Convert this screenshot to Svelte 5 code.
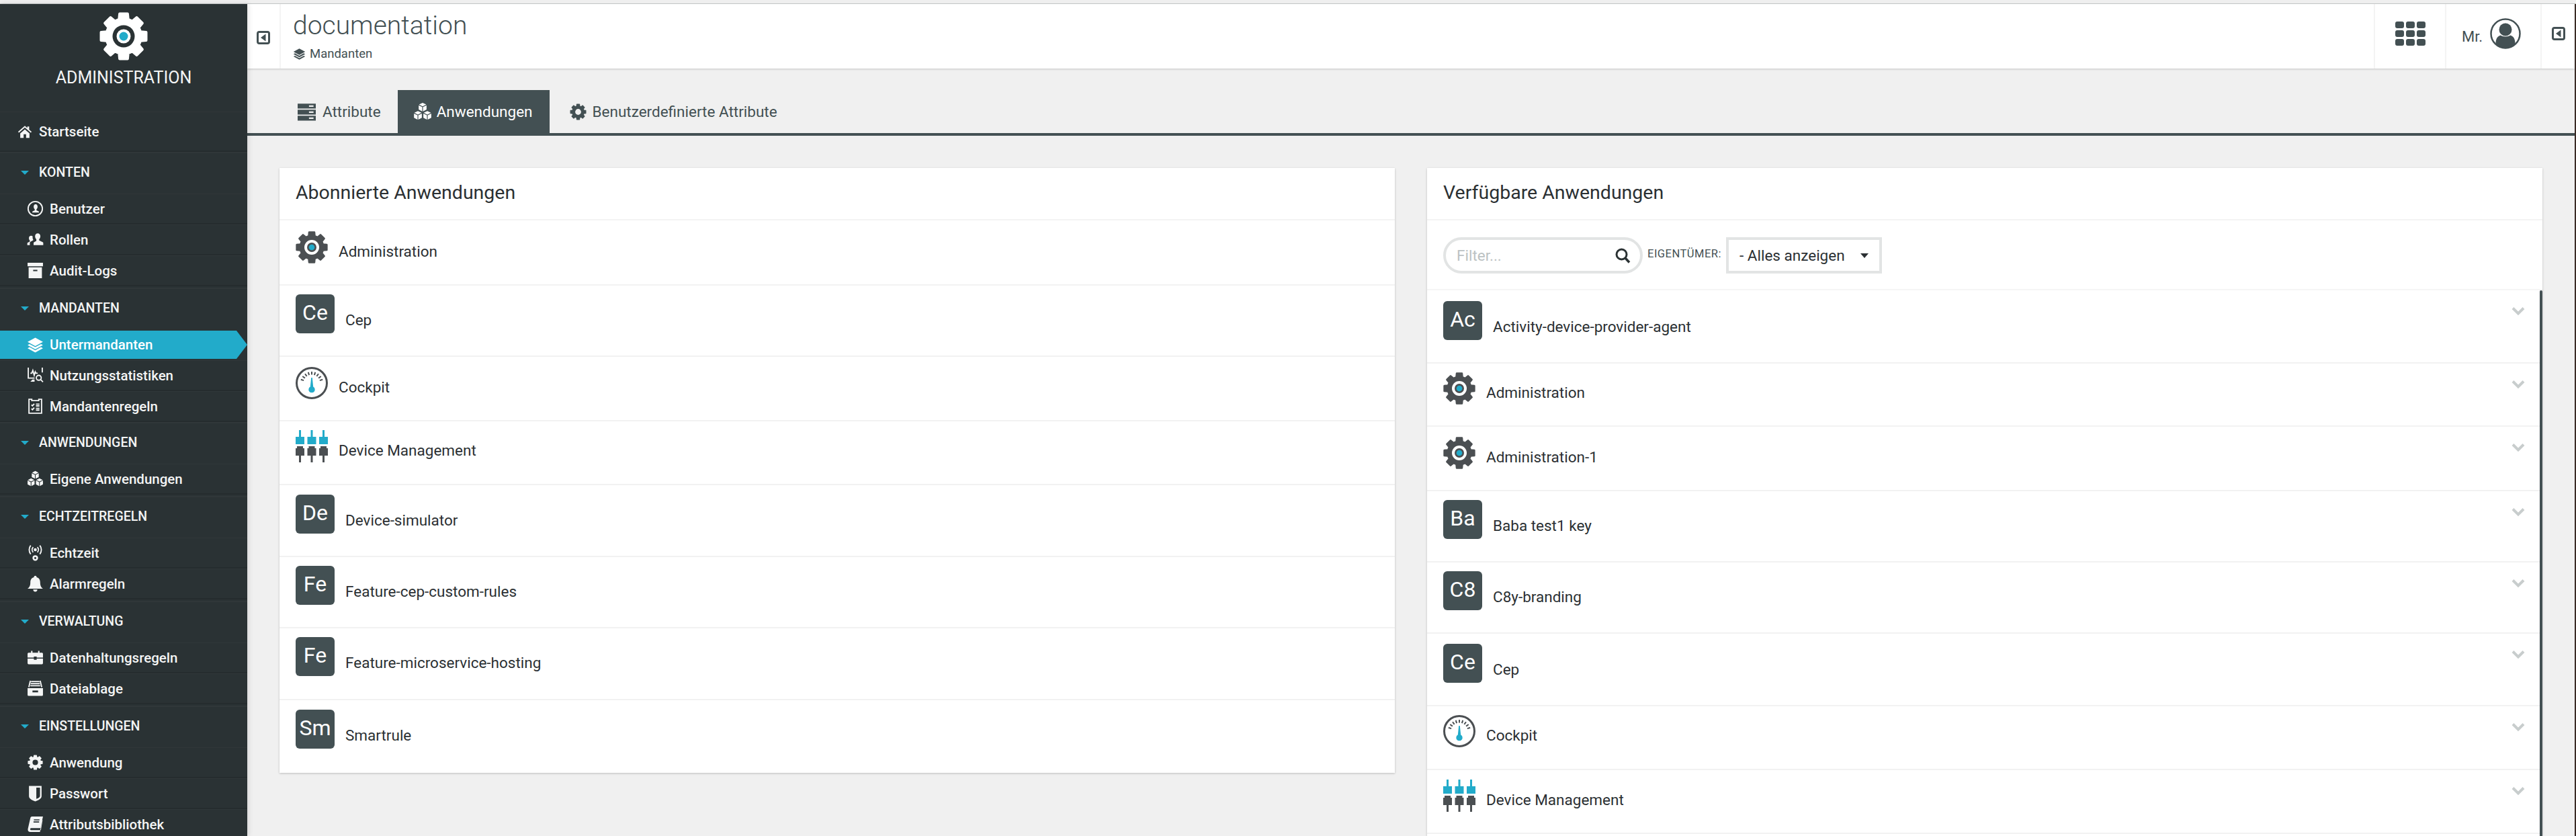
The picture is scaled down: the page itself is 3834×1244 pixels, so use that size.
<script>
  const icons = {
    home: { d: 'M12 2.5 1 12l1.3 1.5L12 5.3l9.7 8.2L23 12l-4-3.4V3.5h-3v2.6zM4.5 14.6 12 8.2l7.5 6.4V22H14v-6h-4v6H4.5z' },
    user: {
      s: 'M12 1.8a10.2 10.2 0 1 0 0 20.4a10.2 10.2 0 1 0 0-20.4z',
      d: 'M12 5.5c2 0 3.3 1.5 3.3 3.7 0 1.7-.8 3.2-1.6 3.9v1.2l2.7 1.3c.6.3.9.8.9 1.4v.5H7.7v-.5c0-.6.3-1.1.9-1.4l2.7-1.3v-1.2c-.8-.7-1.6-2.2-1.6-3.9 0-2.2 1.3-3.7 3.3-3.7z',
    },
    users: { d: 'M15.5 3c2.2 0 3.8 1.7 3.8 4.2 0 2-.9 3.7-1.8 4.4v1.5l5 2.4c.6.3.9.8.9 1.4V20H9.6v-3.1c0-.6.3-1.1.9-1.4l3-1.5v-2.4c-.9-.7-1.8-2.4-1.8-4.4 0-2.5 1.6-4.2 3.8-4.2zM6 6.5c.9 0 1.7.3 2.3.9-.3 1.5-.1 3.2.7 4.7v.9l-3.5 1.8c-.9.5-1.3 1.2-1.3 2.1V20H.6v-2.6c0-.5.2-.9.7-1.1l2.9-1.5v-1.6c-.7-.6-1.3-1.8-1.3-3.4C2.9 8 4.2 6.5 6 6.5z' },
    archive: { d: 'M1 1h22v5H1zM2.5 7.5h19V23h-19zM9 11v2h6v-2z' },
    layers: { d: 'M12 1.5 23 7.5 12 13.5 1 7.5zM1 12l2.8-1.5 8.2 4.5 8.2-4.5L23 12l-11 6zM1 16.5 3.8 15l8.2 4.5L20.2 15l2.8 1.5-11 6z' },
    stats: {
      s: 'M2 1v15h9M22 1v7M5 9h2l1.5-4 2 7 1.5-5 1 2h2.5M17 12a3.5 3.5 0 1 0 0 7a3.5 3.5 0 1 0 0-7zM19.8 18.2 23 21.5',
      d: 'M5 21l3-3h3v3z',
    },
    clipboard: {
      s: 'M3 2h4v2h10V2h4v20H3zM6.5 10l1.5 1.5 2.5-3M6.5 15.5 8 17l2.5-3M13 9h5M13 11.5h5M13 15h5M13 17.5h5',
    },
    cubes: {
      d: 'M12 .8l4.6 2.3L12 5.4 7.4 3.1zM7 4l4.5 2.3v5.5L7 9.5zM17 4l-4.5 2.3v5.5L17 9.5zM6 11.3l4.6 2.3L6 15.9l-4.6-2.3zM1 14.5l4.5 2.3v5.5L1 20zM11 14.5l-4.5 2.3v5.5L11 20zM18 11.3l4.6 2.3-4.6 2.3-4.6-2.3zM13 14.5l4.5 2.3v5.5L13 20zM23 14.5l-4.5 2.3v5.5L23 20z',
    },
    signal: {
      s: 'M5.5 1.5a10 10 0 0 0 0 12.5M18.5 1.5a10 10 0 0 1 0 12.5M9 4a5.5 5.5 0 0 0 0 7.5M15 4a5.5 5.5 0 0 1 0 7.5',
      d: 'M12 5.5a2.2 2.2 0 1 0 0 4.4a2.2 2.2 0 1 0 0-4.4zM12 15.5a4 4 0 1 0 0 8a4 4 0 1 0 0-8zM12 18a1.5 1.5 0 1 1 0 3a1.5 1.5 0 1 1 0-3z',
    },
    bell: { d: 'M12 .8a2 2 0 0 1 2 2c3.4.8 5 3.7 5 7.2 0 5 1.5 7.3 4 9.2H1c2.5-1.9 4-4.2 4-9.2 0-3.5 1.6-6.4 5-7.2a2 2 0 0 1 2-2zM9 20.5h6a3 3 0 0 1-6 0z' },
    toolbox: { d: 'M1 6.5A1.5 1.5 0 0 1 2.5 5H6V2.5h2V5h8V2.5h2V5h3.5A1.5 1.5 0 0 1 23 6.5V12h-9v-1.5h-4V12H1zM1 13.5h9V15h4v-1.5h9V20a1.5 1.5 0 0 1-1.5 1.5h-19A1.5 1.5 0 0 1 1 20z' },
    tray: {
      s: 'M6 2h12M5.5 5h13M5 8h14M5 1 2.8 10M19 1l2.2 9',
      d: 'M1 11.5h22V21a1.5 1.5 0 0 1-1.5 1.5h-19A1.5 1.5 0 0 1 1 21zM8 15v2.5h8V15z',
    },
    shield: { d: 'M3 1.5h18V16c0 3.5-4 5.8-9 7.5-5-1.7-9-4-9-7.5zM13.5 3.8V20c3-1 5.3-2.4 5.3-4.2V3.8z' },
    book: { d: 'M7.5 1H23l-3.5 16.5H6c-1.6 0-1.8 2.8 0 2.8h13.2l-.5 2.7H4.5C2 23 1 21 1.5 18.5L5 3c.3-1.2 1.2-2 2.5-2zM10 5v1.5h8V5zM9.500 8v1.5h8V8zM22.5 6 20 20.3h-1l3-14z' },
    server: { d: 'M0 1h24v6.5H0zM15 3.3v2h6v-2zM0 9h24v6.5H0zM15 11.3v2h6v-2zM0 17h24v6.5H0zM15 19.3v2h6v-2z' },
  };

  function gearPath(outer, root, teeth = 8) {
    const pt = (r, a) => `${(r * Math.cos(a)).toFixed(2)} ${(r * Math.sin(a)).toFixed(2)}`;
    const rad = Math.PI / 180;
    let path = '';
    for (let i = 0; i < teeth; i++) {
      const c = (i * 360) / teeth - 90;
      path += `${i ? 'L' : 'M'}${pt(root, (c - 15) * rad)}L${pt(outer, (c - 10) * rad)}L${pt(outer, (c + 10) * rad)}L${pt(root, (c + 15) * rad)}`;
    }
    return path + 'Z';
  }

  const gearBody = gearPath(34, 26);
  const ticks = [-72, -54, -36, -18, 0, 18, 36, 54, 72];

  const groups = [
    { title: 'KONTEN', items: [['user', 'Benutzer'], ['users', 'Rollen'], ['archive', 'Audit-Logs']] },
    { title: 'MANDANTEN', tight: true, items: [['layers', 'Untermandanten', true], ['stats', 'Nutzungsstatistiken'], ['clipboard', 'Mandantenregeln']] },
    { title: 'ANWENDUNGEN', items: [['cubes', 'Eigene Anwendungen']] },
    { title: 'ECHTZEITREGELN', items: [['signal', 'Echtzeit'], ['bell', 'Alarmregeln']] },
    { title: 'VERWALTUNG', items: [['toolbox', 'Datenhaltungsregeln'], ['tray', 'Dateiablage']] },
    { title: 'EINSTELLUNGEN', items: [['cog', 'Anwendung'], ['shield', 'Passwort'], ['book', 'Attributsbibliothek']] },
  ];

  // h = row height, t = space above the icon
  const subscribed = [
    { icon: 'gear', name: 'Administration', h: 97, t: 16 },
    { icon: 'Ce', name: 'Cep', h: 106, t: 13 },
    { icon: 'cockpit', name: 'Cockpit', h: 96, t: 15 },
    { icon: 'device', name: 'Device Management', h: 95, t: 13 },
    { icon: 'De', name: 'Device-simulator', h: 107, t: 14 },
    { icon: 'Fe', name: 'Feature-cep-custom-rules', h: 106, t: 13 },
    { icon: 'Fe', name: 'Feature-microservice-hosting', h: 107, t: 13 },
    { icon: 'Sm', name: 'Smartrule', h: 108, t: 14 },
  ];

  const available = [
    { icon: 'Ac', name: 'Activity-device-provider-agent', h: 109, t: 16 },
    { icon: 'gear', name: 'Administration', h: 94, t: 13 },
    { icon: 'gear', name: 'Administration-1', h: 96, t: 15 },
    { icon: 'Ba', name: 'Baba test1 key', h: 106, t: 13 },
    { icon: 'C8', name: 'C8y-branding', h: 106, t: 13 },
    { icon: 'Ce', name: 'Cep', h: 108, t: 15 },
    { icon: 'cockpit', name: 'Cockpit', h: 95, t: 13 },
    { icon: 'device', name: 'Device Management', h: 95, t: 14 },
  ];
</script>

{#snippet glyph(name, size)}
  <svg class="glyph" width={size} height={size} viewBox="0 0 24 24" aria-hidden="true">
    {#if name === 'cog'}
      <g transform="translate(12 12) scale(.3)">
        <path d={gearBody} fill="currentColor" stroke="currentColor" stroke-width="4" stroke-linejoin="round" />
        <circle r="13" fill="var(--hole, #2a3234)" />
      </g>
    {:else}
      {#if icons[name].s}
        <path d={icons[name].s} fill="none" stroke="currentColor" stroke-width="1.8" />
      {/if}
      {#if icons[name].d}
        <path d={icons[name].d} fill="currentColor" fill-rule="evenodd" />
      {/if}
    {/if}
  </svg>
{/snippet}

{#snippet gear(size, body, ring, inner)}
  <svg class="glyph" width={size} height={size} viewBox="-36 -36 72 72" aria-hidden="true">
    <path d={gearBody} fill={body} stroke={body} stroke-width="4" stroke-linejoin="round" />
    <circle r="16.5" fill={ring} />
    <circle r="10.5" fill={inner} />
    <circle r="6.5" fill="#22abca" />
  </svg>
{/snippet}

{#snippet collapse()}
  <svg class="glyph" width="20" height="20" viewBox="0 0 20 20" aria-hidden="true">
    <rect x="1.5" y="1.5" width="17" height="17" rx="2.5" fill="none" stroke="#435053" stroke-width="3" />
    <path d="M13.5 4.5v11L6 10z" fill="#435053" />
  </svg>
{/snippet}

{#snippet appIcon(icon)}
  {#if icon === 'gear'}
    <span class="app-icon">{@render gear(48, '#4b4f52', '#fff', '#4b4f52')}</span>
  {:else if icon === 'cockpit'}
    <svg class="app-icon" width="48" height="48" viewBox="0 0 48 48" aria-hidden="true">
      <circle cx="24" cy="24" r="22.5" fill="#fff" stroke="#4b4f52" stroke-width="3" />
      {#each ticks as a}
        <line x1="24" y1="7" x2="24" y2="11.5" stroke="#4b4f52" stroke-width="2" transform="rotate({a} 24 24)" />
      {/each}
      <path d="M23.2 16h1.6l1.4 13.5a4.7 4.7 0 1 1-4.4 0z" fill="#22abca" />
    </svg>
  {:else if icon === 'device'}
    <svg class="app-icon" width="48" height="48" viewBox="0 0 48 48" aria-hidden="true">
      {#each [0, 17.5, 35] as x}
        <path d="M{x + 5} 0h3v10h5v11H{x}V10h5z" fill="#22abca" />
        <path d="M{x + 2} 24h9v3h2v11h-5v10h-3V38H{x}V27h2z" fill="#4b4f52" />
      {/each}
    </svg>
  {:else}
    <span class="badge">{icon}</span>
  {/if}
{/snippet}

{#snippet appRow(app, chevron)}
  <div class="app-row" style="height:{app.h}px;padding-top:{app.t}px">
    {@render appIcon(app.icon)}
    <span class="app-name" class:beside-badge={app.icon.length === 2}>{app.name}</span>
    {#if chevron}
      <svg class="chevron" width="20" height="14" viewBox="0 0 20 14" aria-hidden="true">
        <path d="M2 2.5 10 10.5 18 2.5" fill="none" stroke="#c8cdcd" stroke-width="4" />
      </svg>
    {/if}
  </div>
{/snippet}

<div class="page">
  <div class="strip"></div>
  <div class="shell">
    <aside class="sidebar">
      <div class="logo">
        {@render gear(72, '#fff', '#2a3234', '#fff')}
        <span class="logo-name">ADMINISTRATION</span>
      </div>
      <a class="home" href="#home">
        {@render glyph('home', 22)}
        <span>Startseite</span>
      </a>
      {#each groups as group}
        <section class="group" class:tight={group.tight}>
          <h3 class="group-title"><i class="caret"></i>{group.title}</h3>
          {#each group.items as [icon, label, active]}
            <a class="item" class:active href="#item">
              <span class="item-icon" class:active>{@render glyph(icon, 25)}</span>
              <span>{label}</span>
            </a>
          {/each}
        </section>
      {/each}
    </aside>

    <div class="main">
      <header class="topbar">
        <div class="cell toggle">{@render collapse()}</div>
        <div class="heading">
          <h1>documentation</h1>
          <div class="crumb">{@render glyph('layers', 19)}<span>Mandanten</span></div>
        </div>
        <div class="cell apps">
          <div class="grid-icon">
            {#each Array(9) as _}<i></i>{/each}
          </div>
        </div>
        <div class="cell account">
          <span class="mr">Mr.</span>
          <svg width="46" height="46" viewBox="0 0 46 46" aria-hidden="true">
            <circle cx="23" cy="23" r="21.5" fill="none" stroke="#435053" stroke-width="2.5" />
            <circle cx="23" cy="17" r="9.5" fill="#435053" />
            <path d="M8.5 38c0-8 3-11 7-12.5 4 2.5 11 2.5 15 0 4 1.5 7 4.5 7 12.5-4 4-9 6-14.500 6S12.500 42 8.500 38z" fill="#435053" />
          </svg>
        </div>
        <div class="cell end">{@render collapse()}</div>
      </header>

      <nav class="tabs">
        <a class="tab" href="#a">{@render glyph('server', 27)}<span>Attribute</span></a>
        <a class="tab selected" href="#b">{@render glyph('cubes', 28)}<span>Anwendungen</span></a>
        <a class="tab last" href="#c" style="--hole:#f0f0f0">{@render glyph('cog', 27)}<span>Benutzerdefinierte Attribute</span></a>
      </nav>

      <div class="panels">
        <section class="panel">
          <h2>Abonnierte Anwendungen</h2>
          {#each subscribed as app}
            {@render appRow(app, false)}
          {/each}
        </section>

        <section class="panel">
          <h2>Verfügbare Anwendungen</h2>
          <div class="filters">
            <div class="search">
              <span>Filter...</span>
              <svg width="23" height="23" viewBox="0 0 23 23" aria-hidden="true">
                <circle cx="9.5" cy="9.5" r="7.5" fill="none" stroke="#2b3234" stroke-width="3" />
                <path d="M15 15l6 6.5" stroke="#2b3234" stroke-width="3.5" />
              </svg>
            </div>
            <span class="owner">EIGENTÜMER:</span>
            <div class="select">
              <span>- Alles anzeigen</span>
              <i class="select-caret"></i>
            </div>
          </div>
          <div class="list">
            {#each available as app}
              {@render appRow(app, true)}
            {/each}
            <div class="scrollbar"></div>
          </div>
        </section>
      </div>
    </div>
    <div class="edge"></div>
  </div>
</div>

<style>
  :global(body) {
    margin: 0;
    background: #f0f0f0;
  }

  .page {
    width: 3834px;
    height: 1244px;
    overflow: hidden;
    font-family: Roboto, 'Liberation Sans', sans-serif;
    display: flex;
    flex-direction: column;
    color: #2b3033;
  }

  .strip {
    height: 6px;
    flex: none;
    box-sizing: border-box;
    background: #efefef;
    border-bottom: 1px solid #c9cccc;
  }

  .shell {
    flex: 1;
    display: flex;
    min-height: 0;
  }

  .glyph {
    display: block;
    flex: none;
  }

  a {
    color: inherit;
    text-decoration: none;
  }

  /* Sidebar */
  .sidebar {
    width: 368px;
    flex: none;
    background: #2a3234;
    color: #f4f5f5;
    box-shadow: 2px 0 7px rgba(0, 0, 0, 0.12);
    position: relative;
    z-index: 2;
    font-size: 20.5px;
    font-weight: 500;
  }

  .logo {
    height: 160px;
    box-sizing: border-box;
    padding-top: 12px;
    display: flex;
    flex-direction: column;
    align-items: center;
    gap: 10px;
  }

  .logo-name {
    font-size: 25px;
    font-weight: 400;
    line-height: 32px;
  }

  .home {
    height: 60px;
    box-sizing: border-box;
    display: flex;
    align-items: center;
    gap: 10px;
    padding-left: 26px;
    border-top: 1px solid #303739;
    border-bottom: 2px solid #252c2e;
  }

  .group {
    margin-bottom: 2px;
  }

  .group.tight {
    margin-bottom: 0;
  }

  .group-title {
    height: 62px;
    margin: 0;
    box-sizing: border-box;
    display: flex;
    align-items: center;
    padding: 0 0 3px 31px;
    font-size: 19.5px;
    font-weight: 500;
    border-top: 2px solid #303739;
  }

  .caret {
    width: 0;
    height: 0;
    border-left: 6px solid transparent;
    border-right: 6px solid transparent;
    border-top: 6px solid #22abca;
    margin-right: 15px;
  }

  .item {
    height: 46px;
    box-sizing: border-box;
    display: flex;
    align-items: center;
    gap: 9px;
    padding-left: 40px;
    border-top: 1px solid #303739;
    border-bottom: 2px solid #252c2e;
  }

  .item.active {
    border: none;
    background: #22abca;
    background-clip: content-box;
    padding: 2px 0;
    clip-path: polygon(0 2px, 352px 2px, 368px 50%, 352px 44px, 0 44px);
    color: #fff;
  }

  .item-icon.active {
    margin-left: 40px;
  }

  /* Topbar */
  .main {
    flex: 1;
    min-width: 0;
    display: flex;
    flex-direction: column;
  }

  .topbar {
    height: 96px;
    flex: none;
    display: flex;
    background: #fff;
    box-shadow: 0 1px 3px rgba(0, 0, 0, 0.18);
  }

  .cell {
    display: flex;
    align-items: center;
    justify-content: center;
    box-sizing: border-box;
  }

  .toggle {
    width: 50px;
    border-right: 2px solid #f4f4f4;
    padding-top: 3px;
  }

  .heading {
    flex: 1;
    padding: 8px 0 0 18px;
  }

  h1 {
    margin: 0;
    font-size: 39px;
    font-weight: 300;
    line-height: 48px;
    color: #435053;
  }

  .crumb {
    display: flex;
    align-items: center;
    gap: 6px;
    margin-top: 7px;
    font-size: 18.5px;
    line-height: 22px;
    color: #435053;
  }

  .apps {
    width: 106px;
    border-left: 2px solid #f4f4f4;
    padding-bottom: 8px;
  }

  .grid-icon {
    display: grid;
    grid-template-columns: repeat(3, 13px);
    grid-auto-rows: 10px;
    gap: 3px;
  }

  .grid-icon i {
    background: #435053;
    border-radius: 3px;
  }

  .account {
    width: 142px;
    border-left: 2px solid #f4f4f4;
    justify-content: flex-start;
    padding: 0 0 8px 23px;
    gap: 11px;
    color: #435053;
    font-size: 22px;
  }

  .mr {
    padding-top: 8px;
  }

  .end {
    width: 51px;
    border-left: 2px solid #f4f4f4;
    padding-bottom: 8px;
  }

  /* Tabs */
  .tabs {
    display: flex;
    margin-top: 32px;
    padding-left: 50px;
    height: 68px;
    flex: none;
    box-sizing: border-box;
    border-bottom: 4px solid #435053;
    color: #435053;
    font-size: 22.5px;
  }

  .tab {
    display: flex;
    align-items: center;
    gap: 10px;
    padding: 0 25px;
  }

  .tab.selected {
    background: #435053;
    color: #fff;
    gap: 7px;
    padding: 0 25px 0 23px;
  }

  .tab.last {
    padding-left: 29px;
    gap: 8px;
  }

  /* Panels */
  .panels {
    flex: 1;
    min-height: 0;
    display: grid;
    grid-template-columns: 1660px 1660px;
    gap: 48px;
    padding: 48px 48px 0;
    align-items: start;
  }

  .panel {
    background: #fff;
    box-shadow: 0 1px 3px rgba(0, 0, 0, 0.22);
  }

  h2 {
    margin: 0;
    height: 78px;
    box-sizing: border-box;
    padding: 0 24px 4px;
    display: flex;
    align-items: center;
    font-size: 28.5px;
    font-weight: 400;
    color: #2b3033;
    border-bottom: 2px solid #f3f3f3;
  }

  .app-row {
    position: relative;
    box-sizing: border-box;
    display: flex;
    align-items: flex-start;
    gap: 16px;
    padding-left: 24px;
    border-bottom: 2px solid #f2f2f2;
  }

  .panel:first-child .app-row:last-child {
    border-bottom: none;
  }

  .app-icon {
    display: block;
    flex: none;
    width: 48px;
    height: 48px;
  }

  .badge {
    flex: none;
    width: 58px;
    height: 58px;
    border-radius: 6px;
    background: #435053;
    color: #fff;
    display: flex;
    align-items: center;
    justify-content: center;
    padding-bottom: 4px;
    box-sizing: border-box;
    font-size: 32px;
    font-weight: 400;
  }

  .app-name {
    margin-top: 15px;
    font-size: 22.5px;
    line-height: 30px;
    color: #2b3033;
  }

  .app-name.beside-badge {
    margin-top: 23px;
  }

  .chevron {
    position: absolute;
    right: 26px;
    top: 24px;
  }

  /* Filters */
  .filters {
    height: 104px;
    box-sizing: border-box;
    display: flex;
    align-items: center;
    padding: 2px 24px 0;
    border-bottom: 2px solid #f5f5f5;
  }

  .search {
    width: 297px;
    height: 54px;
    box-sizing: border-box;
    border: 4px solid #e2e4e4;
    border-radius: 27px;
    display: flex;
    align-items: center;
    justify-content: space-between;
    padding: 0 14px 0 16px;
    font-size: 22.5px;
    color: #bcc2c3;
  }

  .owner {
    margin: 0 7px;
    font-size: 16.5px;
    letter-spacing: 0.5px;
    color: #435053;
    padding-bottom: 6px;
  }

  .select {
    width: 232px;
    height: 54px;
    box-sizing: border-box;
    border: 4px solid #e2e4e4;
    display: flex;
    align-items: center;
    padding: 0 16px;
    font-size: 22.5px;
    color: #2b3033;
    justify-content: space-between;
  }

  .select-caret {
    width: 0;
    height: 0;
    border-left: 6.5px solid transparent;
    border-right: 6.5px solid transparent;
    border-top: 7px solid #2b3033;
  }

  .list {
    position: relative;
    height: 812px;
    overflow: hidden;
  }

  .scrollbar {
    position: absolute;
    top: 0;
    right: 0;
    bottom: 0;
    width: 4px;
    background: #435053;
    border-top-left-radius: 2px;
    border-top-right-radius: 2px;
  }

  .edge {
    width: 2px;
    flex: none;
    background: #3a2b26;
  }
</style>
